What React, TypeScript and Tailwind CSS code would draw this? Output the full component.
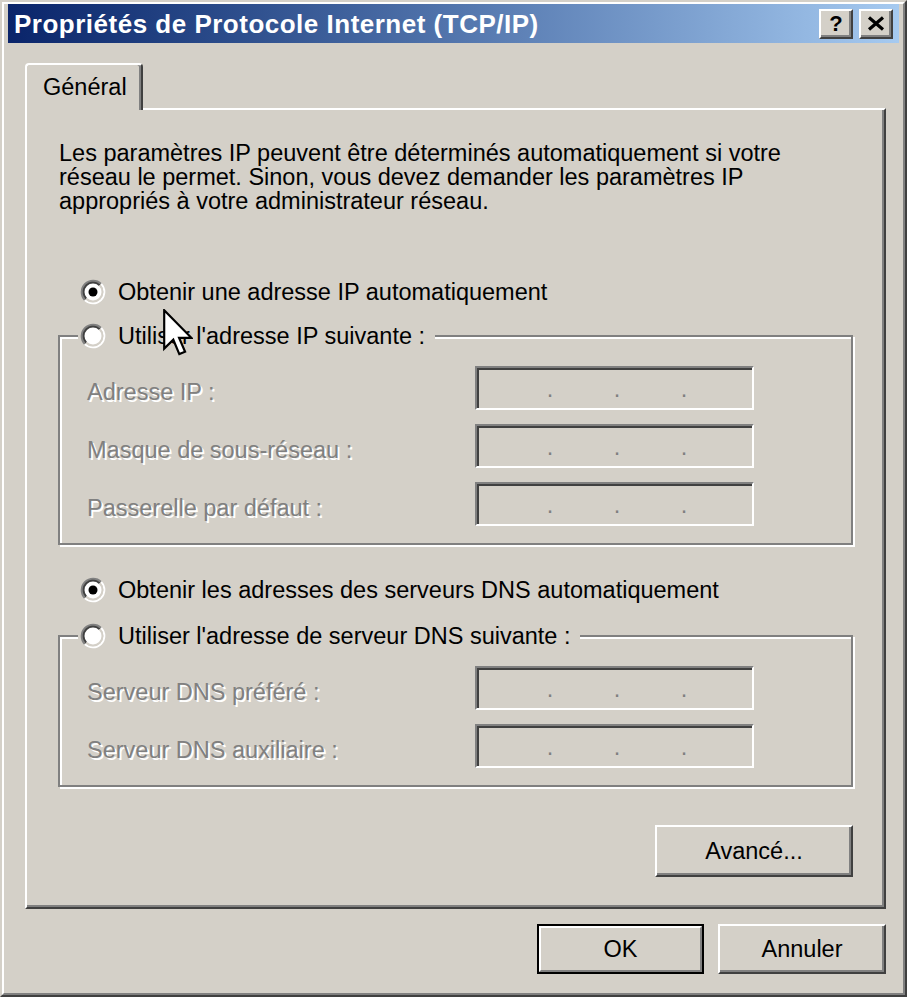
import React from "react";

function Radio({ checked }: { checked?: boolean }) {
  return (
    <svg width="26" height="26" viewBox="0 0 26 26" className="shrink-0">
      <circle cx="13" cy="13" r="10" fill="#ffffff" />
      <path d="M4.87 21.13 A11.5 11.5 0 0 1 21.13 4.87" stroke="#808080" strokeWidth="2" fill="none" />
      <path d="M21.13 4.87 A11.5 11.5 0 0 1 4.87 21.13" stroke="#ffffff" strokeWidth="2" fill="none" />
      <path d="M6.28 19.72 A9.5 9.5 0 0 1 19.72 6.28" stroke="#404040" strokeWidth="2" fill="none" />
      <path d="M19.72 6.28 A9.5 9.5 0 0 1 6.28 19.72" stroke="#d4d0c8" strokeWidth="2" fill="none" />
      {checked && <circle cx="13" cy="13" r="4.5" fill="#000000" />}
    </svg>
  );
}

function IpField() {
  return (
    <div className="w-[279px] h-[44px] shrink-0 border-2 border-t-[#808080] border-l-[#808080] border-b-white border-r-white shadow-[inset_2px_2px_0_#404040] flex pl-[67px] pt-[9px] gap-[55px] text-[#808080] leading-[24px]">
      <span className="w-[12px] text-center">.</span>
      <span className="w-[12px] text-center">.</span>
      <span className="w-[12px] text-center">.</span>
    </div>
  );
}

function FieldRow({ label }: { label: string }) {
  return (
    <div className="flex">
      <div className="w-[388px] pt-[14px] whitespace-nowrap text-[#808080] [text-shadow:2px_2px_0_#ffffff]">
        {label}
      </div>
      <IpField />
    </div>
  );
}

function Group({ legend, rows }: { legend: string; rows: string[] }) {
  return (
    <div className="mx-[31px] border-2 border-[#808080] shadow-[inset_2px_2px_0_#ffffff,2px_2px_0_#ffffff] pb-[17px]">
      <div className="-mt-[14px] ml-[18px] w-fit h-[26px] flex items-center bg-[#d4d0c8] pl-[2px] pr-[10px]">
        <Radio />
        <span className="ml-[12px] whitespace-nowrap">{legend}</span>
      </div>
      <div className="mt-[17px] pl-[27px] flex flex-col gap-[14px]">
        {rows.map((r) => (
          <FieldRow key={r} label={r} />
        ))}
      </div>
    </div>
  );
}

function RaisedButton({
  children,
  className,
}: {
  children: React.ReactNode;
  className: string;
}) {
  return (
    <div
      className={
        "flex items-center justify-center bg-[#d4d0c8] border-2 border-t-white border-l-white border-r-[#404040] border-b-[#404040] shadow-[inset_-2px_-2px_0_#808080] " +
        className
      }
    >
      {children}
    </div>
  );
}

export default function App() {
  return (
    <div className="relative w-[909px] h-[998px] bg-white font-['Liberation_Sans',Arial,sans-serif] text-[23.5px] leading-[24px] text-black">
      {/* window */}
      <div className="w-[907px] h-[997px] bg-[#d4d0c8] border-2 border-t-[#d4d0c8] border-l-[#d4d0c8] border-r-[#404040] border-b-[#404040]">
        <div className="h-full border-2 border-t-white border-l-white border-r-[#808080] border-b-[#808080] px-[4px] flex flex-col">
          {/* title bar */}
          <div className="h-[39px] shrink-0 flex items-center bg-linear-to-r from-[#0a246a] to-[#a6caf0] pl-[6px] pr-[6px]">
            <span className="flex-1 text-white font-bold text-[26px] tracking-[0.5px] leading-none whitespace-nowrap">
              Propriétés de Protocole Internet (TCP/IP)
            </span>
            <RaisedButton className="w-[34px] h-[30px]">
              <span className="font-bold text-[22px] leading-none text-black">?</span>
            </RaisedButton>
            <RaisedButton className="w-[34px] h-[30px] ml-[6px]">
              <svg width="18" height="15" viewBox="0 0 18 15">
                <path d="M2 1.5 L16 13.5 M16 1.5 L2 13.5" stroke="#000" strokeWidth="3.2" fill="none" />
              </svg>
            </RaisedButton>
          </div>

          {/* tab strip */}
          <div className="mt-[20px] flex pl-[17px]">
            <div className="relative z-10 -mb-[2px] w-[118px] h-[47px] bg-[#d4d0c8] border-t-2 border-l-2 border-r-2 border-t-white border-l-white border-r-[#404040] rounded-t-[4px] shadow-[inset_-2px_0_0_#808080] pl-[16px] pt-[10px]">
              Général
            </div>
          </div>

          {/* tab panel */}
          <div className="ml-[17px] w-[861px] h-[801px] shrink-0 border-2 border-t-white border-l-white border-r-[#404040] border-b-[#404040] shadow-[inset_-2px_-2px_0_#808080] flex flex-col">
            <p className="mt-[31px] px-[32px] whitespace-nowrap">
              Les paramètres IP peuvent être déterminés automatiquement si votre
              <br />
              réseau le permet. Sinon, vous devez demander les paramètres IP
              <br />
              appropriés à votre administrateur réseau.
            </p>

            <div className="mt-[66px] h-[26px] pl-[53px] flex items-center">
              <Radio checked />
              <span className="ml-[12px] whitespace-nowrap">Obtenir une adresse IP automatiquement</span>
            </div>

            <div className="mt-[30px]">
              <Group
                legend="Utiliser l'adresse IP suivante :"
                rows={["Adresse IP :", "Masque de sous-réseau :", "Passerelle par défaut :"]}
              />
            </div>

            <div className="mt-[32px] h-[26px] pl-[53px] flex items-center">
              <Radio checked />
              <span className="ml-[12px] whitespace-nowrap">
                Obtenir les adresses des serveurs DNS automatiquement
              </span>
            </div>

            <div className="mt-[32px]">
              <Group
                legend="Utiliser l'adresse de serveur DNS suivante :"
                rows={["Serveur DNS préféré :", "Serveur DNS auxiliaire :"]}
              />
            </div>

            <div className="mt-[38px] flex justify-end pr-[31px]">
              <RaisedButton className="w-[198px] h-[52px]">Avancé...</RaisedButton>
            </div>
          </div>

          {/* dialog buttons */}
          <div className="mt-[15px] flex justify-end gap-[14px] pr-[13px]">
            <div className="w-[167px] h-[50px] border-2 border-black">
              <div className="w-full h-full flex items-center justify-center bg-[#d4d0c8] border-2 border-t-white border-l-white border-r-[#808080] border-b-[#808080]">
                OK
              </div>
            </div>
            <RaisedButton className="w-[168px] h-[50px]">Annuler</RaisedButton>
          </div>
        </div>
      </div>

      {/* mouse pointer */}
      <svg
        className="absolute left-[163px] top-[309px]"
        width="30"
        height="48"
        viewBox="0 0 12.5 20"
      >
        <path
          d="M0.5 0.5 L0.5 16.5 L4.3 12.8 L6.8 18.8 L9.2 17.8 L6.7 12 L11.8 12 Z"
          fill="#ffffff"
          stroke="#000000"
          strokeWidth="0.9"
          strokeLinejoin="miter"
        />
      </svg>
    </div>
  );
}
